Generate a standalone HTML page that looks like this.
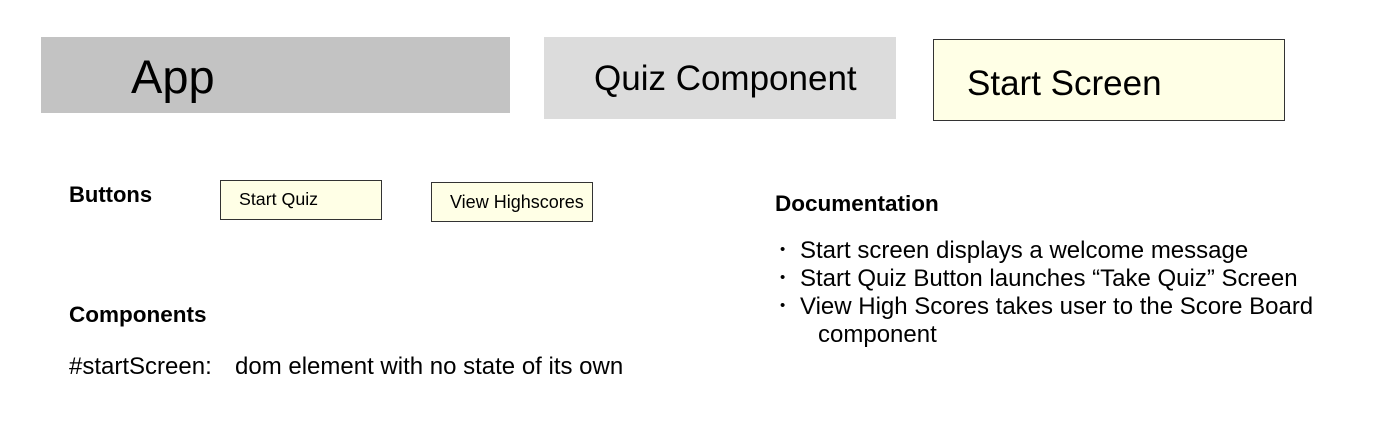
<!DOCTYPE html>
<html><head><meta charset="utf-8"><style>
body{margin:0;width:1382px;height:444px;background:#fff;position:relative;overflow:hidden;font-family:"Liberation Sans",sans-serif;color:#000}
div{position:absolute;white-space:nowrap}
.t{line-height:1}
.b{font-size:24px}
.d{font-size:15px}
</style></head><body>
<div style="left:41px;top:37px;width:469px;height:76px;background:#c3c3c3"></div>
<div class="t" style="left:131px;top:53px;font-size:47px">App</div>
<div style="left:544px;top:37px;width:352px;height:82px;background:#dcdcdc"></div>
<div class="t" style="left:594px;top:61px;font-size:35px">Quiz Component</div>
<div style="left:933px;top:39px;width:350px;height:80px;background:#ffffe6;border:1px solid #333"></div>
<div class="t" style="left:967px;top:66px;font-size:35px">Start Screen</div>

<div class="t" style="left:69px;top:184px;font-size:22px;font-weight:bold">Buttons</div>
<div style="left:220px;top:180px;width:160px;height:38px;background:#ffffe6;border:1px solid #333"></div>
<div class="t" style="left:239px;top:191px;font-size:17.8px">Start Quiz</div>
<div style="left:431px;top:182px;width:160px;height:38px;background:#ffffe6;border:1px solid #333"></div>
<div class="t" style="left:450px;top:193px;font-size:18px">View Highscores</div>

<div class="t" style="left:775px;top:193px;font-size:22.5px;font-weight:bold">Documentation</div>
<div class="t d" style="left:780px;top:242px">•</div>
<div class="t b" style="left:800px;top:239px">Start screen displays a welcome message</div>
<div class="t d" style="left:780px;top:270px">•</div>
<div class="t b" style="left:800px;top:267px">Start Quiz Button launches “Take Quiz” Screen</div>
<div class="t d" style="left:780px;top:298px">•</div>
<div class="t b" style="left:800px;top:295px">View High Scores takes user to the Score Board</div>
<div class="t b" style="left:818px;top:323px">component</div>

<div class="t" style="left:69px;top:304px;font-size:22.5px;font-weight:bold">Components</div>
<div class="t b" style="left:69px;top:355px">#startScreen:</div>
<div class="t b" style="left:235px;top:355px">dom element with no state of its own</div>
</body></html>
